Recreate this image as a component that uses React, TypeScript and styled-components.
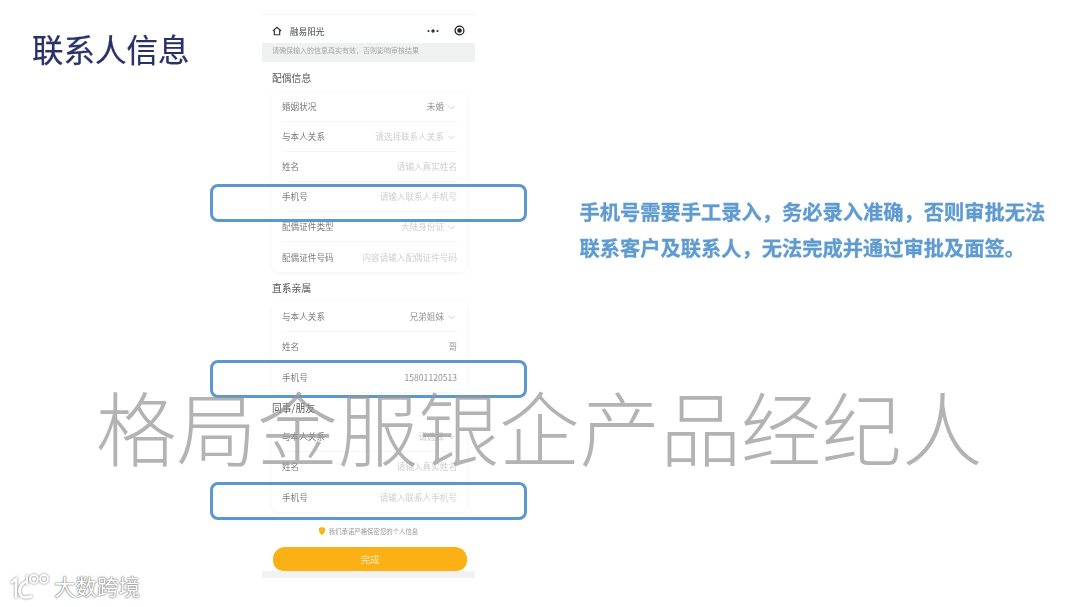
import React from "react"
import styled, { createGlobalStyle } from "styled-components"
import { ChevronDown } from "lucide-react"

const FONT = `"Noto Sans CJK SC", "Liberation Sans", sans-serif`

const sections = [
    {
        title: "配偶信息",
        rows: [
            { label: "婚姻状况", value: "未婚", filled: true, select: true },
            { label: "与本人关系", value: "请选择联系人关系", select: true },
            { label: "姓名", value: "请输入真实姓名" },
            { label: "手机号", value: "请输入联系人手机号" },
            { label: "配偶证件类型", value: "大陆身份证", select: true },
            { label: "配偶证件号码", value: "内容请输入配偶证件号码" },
        ],
    },
    {
        title: "直系亲属",
        rows: [
            { label: "与本人关系", value: "兄弟姐妹", filled: true, select: true },
            { label: "姓名", value: "哥", filled: true },
            { label: "手机号", value: "15801120513", filled: true },
        ],
    },
    {
        title: "同事/朋友",
        rows: [
            { label: "与本人关系", value: "请选择", select: true },
            { label: "姓名", value: "请输入真实姓名" },
            { label: "手机号", value: "请输入联系人手机号" },
        ],
    },
]

export default function App() {
    return (
        <SPage>
            <GlobalStyle />
            <STitleColumn>
                <STitle>联系人信息</STitle>
            </STitleColumn>

            <SPhone>
                <SNavBar>
                    <SNavLeft>
                        <svg width="10" height="10" viewBox="0 0 12 12" fill="none" stroke="#333" strokeWidth="1.4">
                            <path d="M1 6 L6 1.5 L11 6" />
                            <path d="M2.8 5 V10.5 H9.2 V5" />
                        </svg>
                        <SNavTitle>融易阳光</SNavTitle>
                    </SNavLeft>
                    <SNavRight>
                        <svg width="12" height="4" viewBox="0 0 12 4" fill="#333">
                            <circle cx="1.5" cy="2" r="1.1" />
                            <circle cx="6" cy="2" r="1.7" />
                            <circle cx="10.5" cy="2" r="1.1" />
                        </svg>
                        <svg width="11" height="11" viewBox="0 0 12 12">
                            <circle cx="6" cy="6" r="4.8" fill="none" stroke="#222" strokeWidth="1.4" />
                            <circle cx="6" cy="6" r="2.5" fill="#222" />
                        </svg>
                    </SNavRight>
                </SNavBar>
                <SNotice>请确保输入的信息真实有效，否则影响审核结果</SNotice>

                {sections.map((section) => (
                    <SSection key={section.title}>
                        <SSectionTitle>{section.title}</SSectionTitle>
                        <SCard>
                            {section.rows.map((row) => (
                                <SRow key={row.label}>
                                    <SLabel>{row.label}</SLabel>
                                    <SValue $filled={row.filled}>
                                        {row.value}
                                        {row.select && <SChevron size={11} strokeWidth={1.2} />}
                                    </SValue>
                                </SRow>
                            ))}
                        </SCard>
                    </SSection>
                ))}

                <SPromise>
                    <svg width="6" height="8" viewBox="0 0 6 8" fill="#f7b617">
                        <path d="M0 1 L3 0 L6 1 V4 C6 6 4 7.2 3 8 C2 7.2 0 6 0 4 Z" />
                    </svg>
                    我们承诺严格保密您的个人信息
                </SPromise>
                <SDoneButton>完成</SDoneButton>
                <SHomeBar />
            </SPhone>

            <SCallout>
                手机号需要手工录入，务必录入准确，否则审批无法
                <br />
                联系客户及联系人，无法完成并通过审批及面签。
            </SCallout>

            <SHighlight $top={184} />
            <SHighlight $top={360} />
            <SHighlight $top={482} />

            <SWatermark>格局金服银企产品经纪人</SWatermark>

            <SBrand>
                <svg width="42" height="30" viewBox="0 0 42 30" fill="none" stroke="#fff" strokeWidth="1.8">
                    <g style={{ filter: "drop-shadow(0 0 1px #777)" }}>
                        <path d="M3 12 L8 8 V27" strokeWidth="2.6" />
                        <path d="M20 10 C13 12 10 18 12 23 C14 27 19 27 24 25" strokeWidth="2.6" />
                        <path d="M19 4 V14" />
                        <circle cx="26" cy="8" r="4" />
                        <circle cx="36" cy="8" r="4" />
                    </g>
                </svg>
                <SBrandName>大数跨境</SBrandName>
            </SBrand>
        </SPage>
    )
}

const GlobalStyle = createGlobalStyle`
    html, body {
        margin: 0;
        padding: 0;
        background: #fff;
    }
`

const SPage = styled.div`
    position: relative;
    display: flex;
    align-items: flex-start;
    width: 1080px;
    height: 607px;
    overflow: hidden;
    background: #fff;
    font-family: ${FONT};
`

const STitleColumn = styled.div`
    width: 262px;
    flex-shrink: 0;
    padding: 25px 0 0 32px;
    box-sizing: border-box;
`

const STitle = styled.h1`
    margin: 0;
    font-size: 31.5px;
    line-height: 46px;
    font-weight: 400;
    color: #2a3068;
    -webkit-text-stroke: 0.25px #2a3068;
    filter: blur(0.3px);
`

const SPhone = styled.div`
    width: 213px;
    flex-shrink: 0;
    margin-top: 14px;
    display: flex;
    flex-direction: column;
    filter: blur(0.6px);
`

const SNavBar = styled.div`
    height: 29px;
    padding: 3px 10px 0 10px;
    display: flex;
    align-items: center;
    justify-content: space-between;
    border-top: 1px solid #f6f6f6;
    box-sizing: border-box;
`

const SNavLeft = styled.div`
    display: flex;
    align-items: center;
    gap: 8px;
`

const SNavTitle = styled.span`
    font-size: 8.6px;
    color: #444;
`

const SNavRight = styled.div`
    display: flex;
    align-items: center;
    gap: 15px;
`

const SNotice = styled.div`
    height: 19px;
    padding-left: 10px;
    background: #eff0f0;
    font-size: 7px;
    line-height: 14px;
    color: #a5a9aa;
`

const SSection = styled.section`
    padding: 0 8px 0 10px;
    display: flex;
    flex-direction: column;
`

const SSectionTitle = styled.h2`
    margin: 0;
    height: 30px;
    padding-top: 9px;
    box-sizing: border-box;
    font-size: 9.8px;
    line-height: 14px;
    font-weight: 400;
    color: #555;
`

const SCard = styled.div`
    padding: 0 10px;
    background: #fff;
    border-radius: 5px;
    box-shadow: 0 1px 5px rgba(0, 0, 0, 0.05);
`

const SRow = styled.div`
    height: 30px;
    padding-bottom: 1px;
    display: flex;
    align-items: center;
    justify-content: space-between;
    border-bottom: 1px solid #f6f6f6;
    box-sizing: border-box;

    &:last-child {
        border-bottom: none;
    }
`

const SLabel = styled.span`
    font-size: 8.6px;
    color: #7c7c7c;
`

const SValue = styled.span<{ $filled?: boolean }>`
    display: flex;
    align-items: center;
    gap: 2px;
    font-size: 8.6px;
    color: ${(p) => (p.$filled ? "#949494" : "#cfcfcf")};
`

const SChevron = styled(ChevronDown)`
    color: #aaa;
    transform: translateY(1px);
`

const SPromise = styled.div`
    margin-top: 13px;
    height: 12px;
    display: flex;
    align-items: center;
    justify-content: center;
    gap: 4px;
    font-size: 6.4px;
    color: #999;
`

const SDoneButton = styled.div`
    margin: 10px 8px 0 11px;
    height: 24px;
    border-radius: 12px 12px 10px 10px;
    background: #fbb116;
    display: flex;
    align-items: center;
    justify-content: center;
    font-size: 9.5px;
    color: #fde9b8;
`

const SHomeBar = styled.div`
    height: 7px;
    background: #f2f2f2;
`

const SCallout = styled.p`
    margin: 194px 0 0 104.5px;
    white-space: nowrap;
    font-size: 20.25px;
    line-height: 36px;
    font-weight: 700;
    color: #5f9bd0;
    -webkit-text-stroke: 0.3px #5f9bd0;
    filter: blur(0.4px);
`

const SHighlight = styled.div<{ $top: number }>`
    position: absolute;
    left: 210px;
    top: ${(p) => p.$top}px;
    width: 317px;
    height: 38px;
    box-sizing: border-box;
    border: 3px solid #5c97cf;
    border-radius: 8px;
    filter: blur(0.4px);
`

const SWatermark = styled.div`
    position: absolute;
    left: 96px;
    top: 375px;
    white-space: nowrap;
    font-size: 80.6px;
    line-height: 100px;
    font-weight: 300;
    color: rgba(150, 150, 150, 0.72);
`

const SBrand = styled.div`
    position: absolute;
    left: 8px;
    top: 571px;
    display: flex;
    align-items: center;
    gap: 4px;
`

const SBrandName = styled.span`
    font-size: 21.5px;
    line-height: 30px;
    color: #fff;
    text-shadow: 0 0 2px #666, 0 0 1px #666;
`
